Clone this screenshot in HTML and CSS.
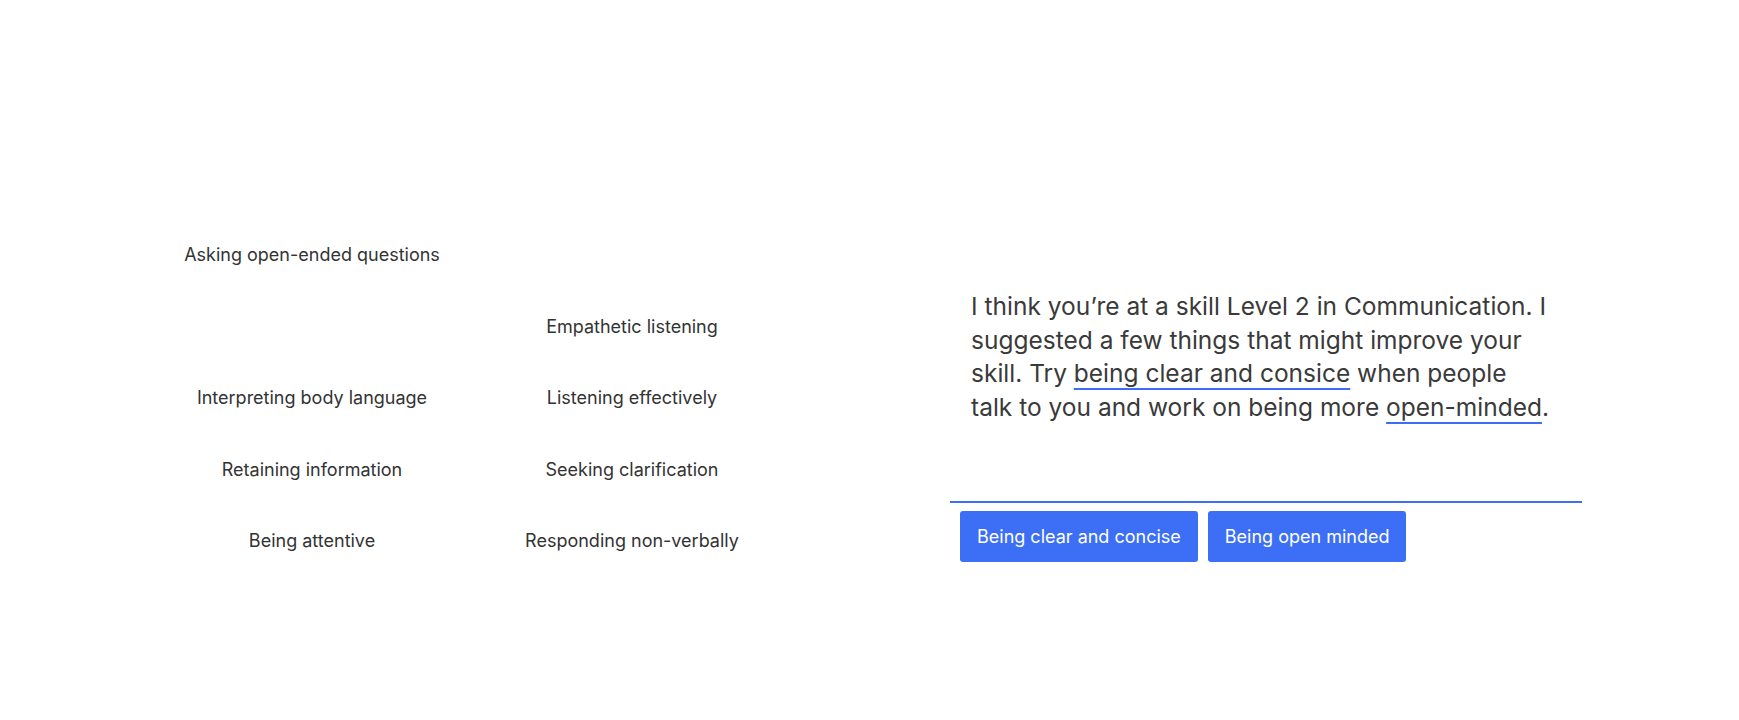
FILE: index.html
```html
<!DOCTYPE html>
<html lang="en">
<head>
<meta charset="utf-8">
<title>Communication skill</title>
<link rel="stylesheet" href="styles.css">
</head>
<body>
<main class="page">
  <section class="skills">
    <div class="skill">Asking open-ended questions</div>
    <div class="skill"></div>
    <div class="skill"></div>
    <div class="skill">Empathetic listening</div>
    <div class="skill">Interpreting body language</div>
    <div class="skill">Listening effectively</div>
    <div class="skill">Retaining information</div>
    <div class="skill">Seeking clarification</div>
    <div class="skill">Being attentive</div>
    <div class="skill">Responding non-verbally</div>
  </section>
  <section class="panel">
    <p class="message">I think you’re at a skill Level 2 in Communication. I<br>suggested a few things that might improve your<br>skill. Try <span class="link">being clear and consice</span> when people<br>talk to you and work on being more <span class="link">open-minded</span>.</p>
    <div class="divider"></div>
    <div class="actions">
      <button class="chip">Being clear and concise</button>
      <button class="chip">Being open minded</button>
    </div>
  </section>
</main>
</body>
</html>
```
FILE: styles.css
```css
html, body {
  margin: 0;
  padding: 0;
  background: #ffffff;
}

body {
  font-family: Inter, "Noto Sans", sans-serif;
  color: #333333;
}

.page {
  display: flex;
  align-items: flex-start;
  padding: 219px 0 0 152px;
  gap: 158px;
}

.skills {
  display: grid;
  grid-template-columns: 320px 320px;
  grid-auto-rows: 71.5px;
}

.skill {
  display: flex;
  align-items: center;
  justify-content: center;
  font-size: 18px;
  color: #333333;
}

.panel {
  width: 632px;
  margin-top: 71px;
  display: flex;
  flex-direction: column;
}

.message {
  margin: 0;
  padding: 0 0 0 21px;
  font-size: 24.5px;
  line-height: 33.6px;
  color: #3a3a3a;
  white-space: nowrap;
}

.link {
  text-decoration: underline;
  text-decoration-color: #3d6cf6;
  text-decoration-thickness: 2px;
  text-underline-offset: 6px;
}

.divider {
  margin-top: 77px;
  height: 2px;
  background: #3d6cf6;
}

.actions {
  display: flex;
  gap: 10px;
  padding: 8px 0 0 10px;
}

.chip {
  height: 51px;
  padding: 0 17px;
  border: none;
  border-radius: 3px;
  background: #3d6ff6;
  color: #ffffff;
  font-family: Inter, "Noto Sans", sans-serif;
  font-size: 18px;
}
```
